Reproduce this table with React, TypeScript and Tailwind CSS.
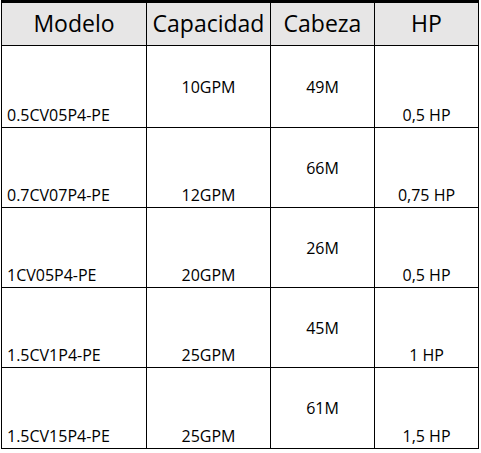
const rows = [
  { modelo: '0.5CV05P4-PE', capacidad: '10GPM', capMiddle: true, cabeza: '49M', hp: '0,5 HP', h: 'h-[82px]' },
  { modelo: '0.7CV07P4-PE', capacidad: '12GPM', capMiddle: false, cabeza: '66M', hp: '0,75 HP', h: 'h-[80px]' },
  { modelo: '1CV05P4-PE', capacidad: '20GPM', capMiddle: false, cabeza: '26M', hp: '0,5 HP', h: 'h-[80px]' },
  { modelo: '1.5CV1P4-PE', capacidad: '25GPM', capMiddle: false, cabeza: '45M', hp: '1 HP', h: 'h-[80px]' },
  { modelo: '1.5CV15P4-PE', capacidad: '25GPM', capMiddle: false, cabeza: '61M', hp: '1,5 HP', h: 'h-[81px]' },
];

const cell = 'border-r border-b border-black flex';

export default function App() {
  return (
    <div className="min-h-screen bg-white pl-[1px] font-['Open_Sans',sans-serif] text-black">
      <div className="w-[478px] border-t-[3px] border-l border-black grid grid-cols-[145px_124px_104px_104px]">
        {['Modelo', 'Capacidad', 'Cabeza', 'HP'].map((h) => (
          <div key={h} className={`${cell} h-[43px] items-center justify-center bg-[#e7e6e6] text-[23px] leading-none pb-[1px]`}>
            {h}
          </div>
        ))}

        {rows.map((r) => (
          <div key={r.modelo} className="contents text-[16px] leading-none">
            <div className={`${cell} ${r.h} items-end pl-[5px] pb-[4px]`}>{r.modelo}</div>
            <div className={`${cell} ${r.h} justify-center ${r.capMiddle ? 'items-center' : 'items-end pb-[4px]'}`}>
              {r.capacidad}
            </div>
            <div className={`${cell} ${r.h} items-center justify-center`}>{r.cabeza}</div>
            <div className={`${cell} ${r.h} items-end justify-center pb-[4px]`}>{r.hp}</div>
          </div>
        ))}
      </div>
    </div>
  );
}
